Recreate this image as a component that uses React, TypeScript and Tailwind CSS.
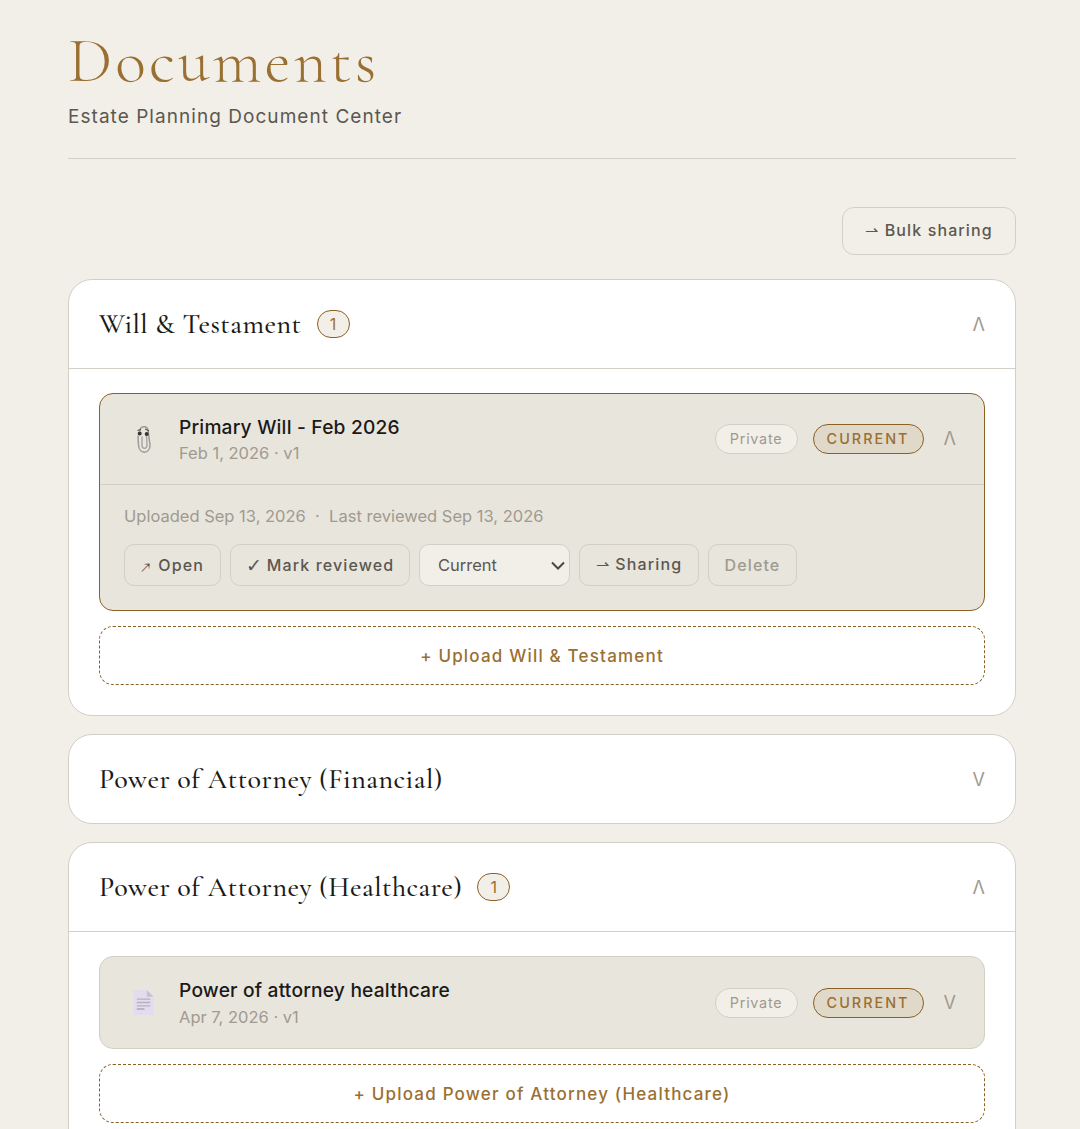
import React from "react";

const serif = "font-['Cormorant_Garamond','Liberation_Serif',serif]";

function Clip() {
  return (
    <svg width="14" height="29" viewBox="0 0 14 29" fill="none" aria-hidden="true">
      <path d="M3 6 C3 1 10 0 11 5 L13 20 C13 29.5 2 29.5 1.5 20 L1 11" stroke="#9b9b98" strokeWidth="1.5" strokeLinecap="round" />
      <path d="M5 12 L5 20 C5 24.5 10 24.5 10 20 L9.5 10" stroke="#a5a5a2" strokeWidth="1.4" strokeLinecap="round" />
      <circle cx="2.7" cy="8.5" r="2" fill="#3a3330" />
      <circle cx="9.7" cy="9" r="2" fill="#3a3330" />
      <path d="M0.5 5.5 L4 4.5 M8 4 L12 6" stroke="#4a4340" strokeWidth="1" />
    </svg>
  );
}

function Doc() {
  return (
    <svg width="21" height="27" viewBox="0 0 22 28" aria-hidden="true">
      <path d="M0.5 1 H14.5 L21.5 8 V27 H0.5 Z" fill="#e3dcee" />
      <path d="M14.5 1 L21.5 8 H14.5 Z" fill="#c9c1d2" />
      <path d="M4 10.5 H18 M4 14 H18 M4 17.5 H18" stroke="#b5afbd" strokeWidth="1.4" />
      <path d="M4 20.8 H12" stroke="#a5a0ac" strokeWidth="1.4" />
    </svg>
  );
}

function Badge({ n }: { n: number }) {
  return (
    <span className="flex h-[28px] w-[33px] items-center justify-center rounded-full border border-[#8b6024] bg-[#f2efe8] text-[16px] text-[#9a6f32]">
      {n}
    </span>
  );
}

function Chevron({ up }: { up: boolean }) {
  return <span className="block text-[18px] leading-none text-[#a09a8f]">{up ? "Λ" : "V"}</span>;
}

function DocHead({ icon, title, meta, up, tall }: { icon: React.ReactNode; title: string; meta: string; up: boolean; tall?: boolean }) {
  return (
    <div className={`flex items-center pl-[31px] pr-[28px] ${tall ? "h-[91px]" : "h-[90px]"}`}>
      <div className="flex w-[25px] justify-center">{icon}</div>
      <div className={`ml-[23px] flex-1 ${tall ? "" : "pt-px"}`}>
        <div className="text-[19.2px] leading-[26px] font-medium tracking-[0.01em] text-[#1a1a18]">{title}</div>
        <div className={`text-[16.5px] leading-[24px] text-[#a09a8f] ${tall ? "mt-[2px]" : "mt-[1px]"}`}>{meta}</div>
      </div>
      <span className="flex h-[30px] w-[83px] items-center justify-center rounded-full border border-[#d4cfc6] bg-[#f2efe8] text-[14.4px] tracking-[0.05em] text-[#a09a8f]">
        Private
      </span>
      <span className="ml-[15px] flex h-[30px] w-[111px] items-center justify-center rounded-full border border-[#8b6024] bg-[#e0d9ca] text-[14.4px] font-medium tracking-[0.14em] text-[#9a6f32]">
        CURRENT
      </span>
      <span className="ml-[20px]"><Chevron up={up} /></span>
    </div>
  );
}

function ActionButton({ w, children, muted }: { w: string; children: React.ReactNode; muted?: boolean }) {
  return (
    <button className={`flex h-[42px] items-center justify-center rounded-[10px] border border-[#d4cfc6] text-[16px] font-medium tracking-[0.07em] ${w} ${muted ? "text-[#a09a8f]" : "text-[#5c5750]"}`}>
      {children}
    </button>
  );
}

function Upload({ label }: { label: string }) {
  return (
    <button className="mt-[15px] flex h-[59px] w-full items-center justify-center rounded-[14px] border border-dashed border-[#8b6024] pt-[2px] text-[17px] font-medium tracking-[0.07em] text-[#9a6f32]">
      {label}
    </button>
  );
}

function SectionHead({ title, count, up, border }: { title: string; count?: number; up: boolean; border?: boolean }) {
  return (
    <div className={`flex items-center pl-[30px] pr-[30px] ${border ? "h-[89px] border-b border-[#d4cfc6]" : "h-[88px]"}`}>
      <h2 className={`${serif} text-[28px] leading-none font-medium tracking-[0.0175em] text-[#1a1a18]`}>{title}</h2>
      {count !== undefined && <span className="ml-[15px]"><Badge n={count} /></span>}
      <span className="mt-[2px] ml-auto"><Chevron up={up} /></span>
    </div>
  );
}

export default function App() {
  return (
    <div className="h-[1129px] overflow-hidden bg-[#f2efe8] pr-[64px] pl-[68px] font-['Inter',sans-serif]">
      <header className="h-[159px] border-b border-[#d4cfc6] pt-[29px]">
        <h1 className={`${serif} text-[64px] leading-[64px] font-light tracking-[0.05em] text-[#9a6f32]`}>Documents</h1>
        <p className="mt-[10px] text-[19px] leading-[28px] tracking-[0.055em] text-[#5c5750]">Estate Planning Document Center</p>
      </header>

      <div className="mt-[48px] flex justify-end">
        <button className="flex h-[48px] w-[174px] items-center justify-center rounded-[12px] border border-[#d4cfc6] pb-[2px] text-[16px] font-medium tracking-[0.07em] text-[#5c5750]">
          ⇀ Bulk sharing
        </button>
      </div>

      <section className="mt-[24px] rounded-[24px] border border-[#d4cfc6] bg-white">
        <SectionHead title="Will & Testament" count={1} up border />
        <div className="px-[30px] pt-[24px] pb-[30px]">
          <div className="rounded-[14px] border border-[#8b6024] bg-[#e8e5dd]">
            <div className="border-b border-[#d4cfc6]">
              <DocHead icon={<Clip />} title="Primary Will - Feb 2026" meta="Feb 1, 2026 · v1" up />
            </div>
            <div className="px-[24px] pt-[19px] pb-[24px]">
              <p className="text-[16.5px] leading-[24px] text-[#a09a8f]">
                Uploaded Sep 13, 2026 &nbsp;·&nbsp; Last reviewed Sep 13, 2026
              </p>
              <div className="mt-[16px] flex gap-[9px]">
                <ActionButton w="w-[97px]"><span className={`${serif} mr-[7px] text-[19px] leading-none`}>↗</span>Open</ActionButton>
                <ActionButton w="w-[180px]"><span className={`${serif} mr-[4px] text-[19px] leading-none`}>✓</span>Mark reviewed</ActionButton>
                <div className="relative">
                  <select defaultValue="Current" className="h-[42px] w-[151px] appearance-none rounded-[10px] border border-[#d4cfc6] bg-[#f2efe8] pl-[18px] text-[16.5px] text-[#5c5750]">
                    <option>Current</option>
                  </select>
                  <svg className="pointer-events-none absolute top-[17px] right-[5px]" width="14" height="9" viewBox="0 0 14 9" fill="none" aria-hidden="true">
                    <path d="M1 1.5 L7 7.5 L13 1.5" stroke="#4a4640" strokeWidth="2" />
                  </svg>
                </div>
                <ActionButton w="w-[120px]"><span className="pb-[2px]">⇀ Sharing</span></ActionButton>
                <ActionButton w="w-[89px]" muted>Delete</ActionButton>
              </div>
            </div>
          </div>
          <Upload label="+ Upload Will & Testament" />
        </div>
      </section>

      <section className="mt-[18px] rounded-[24px] border border-[#d4cfc6] bg-white">
        <SectionHead title="Power of Attorney (Financial)" up={false} />
      </section>

      <section className="mt-[18px] rounded-[24px] border border-[#d4cfc6] bg-white">
        <SectionHead title="Power of Attorney (Healthcare)" count={1} up border />
        <div className="px-[30px] pt-[24px] pb-[30px]">
          <div className="rounded-[14px] border border-[#d4cfc6] bg-[#e8e5dd]">
            <DocHead tall icon={<Doc />} title="Power of attorney healthcare" meta="Apr 7, 2026 · v1" up={false} />
          </div>
          <Upload label="+ Upload Power of Attorney (Healthcare)" />
        </div>
      </section>
    </div>
  );
}
